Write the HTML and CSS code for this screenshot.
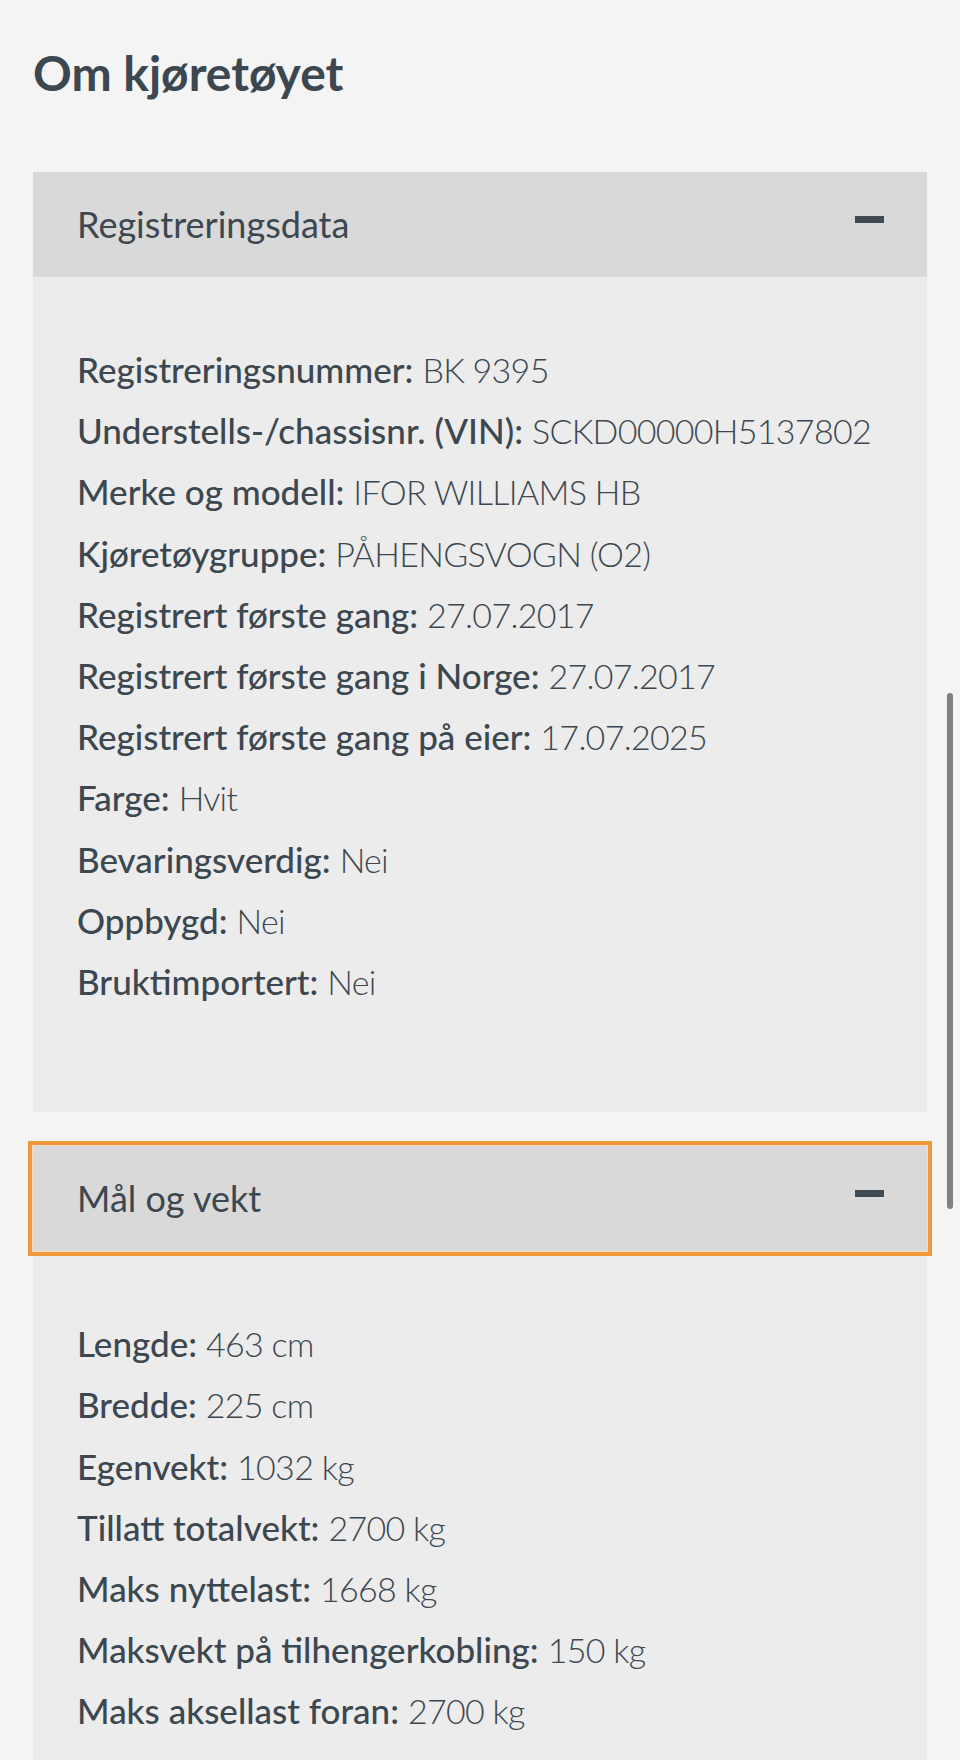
FILE: index.html
```html
<!DOCTYPE html>
<html lang="no">
<head>
<meta charset="utf-8">
<title>Om kjøretøyet</title>
<link rel="stylesheet" href="styles.css">
</head>
<body>
<main class="page">
  <h1 class="title">Om kjøretøyet</h1>

  <section class="panel">
    <div class="panel-head">
      <span class="panel-title">Registreringsdata</span>
      <span class="minus"></span>
    </div>
    <div class="panel-body">
      <p class="row"><span class="label">Registreringsnummer:</span> <span class="value">BK 9395</span></p>
      <p class="row"><span class="label">Understells-/chassisnr. (VIN):</span> <span class="value">SCKD00000H5137802</span></p>
      <p class="row"><span class="label">Merke og modell:</span> <span class="value">IFOR WILLIAMS HB</span></p>
      <p class="row"><span class="label">Kjøretøygruppe:</span> <span class="value">PÅHENGSVOGN (O2)</span></p>
      <p class="row"><span class="label">Registrert første gang:</span> <span class="value">27.07.2017</span></p>
      <p class="row"><span class="label">Registrert første gang i Norge:</span> <span class="value">27.07.2017</span></p>
      <p class="row"><span class="label">Registrert første gang på eier:</span> <span class="value">17.07.2025</span></p>
      <p class="row"><span class="label">Farge:</span> <span class="value">Hvit</span></p>
      <p class="row"><span class="label">Bevaringsverdig:</span> <span class="value">Nei</span></p>
      <p class="row"><span class="label">Oppbygd:</span> <span class="value">Nei</span></p>
      <p class="row"><span class="label">Bruktimportert:</span> <span class="value">Nei</span></p>
    </div>
  </section>

  <section class="panel">
    <div class="panel-head focused">
      <span class="panel-title">Mål og vekt</span>
      <span class="minus"></span>
    </div>
    <div class="panel-body">
      <p class="row"><span class="label">Lengde:</span> <span class="value">463 cm</span></p>
      <p class="row"><span class="label">Bredde:</span> <span class="value">225 cm</span></p>
      <p class="row"><span class="label">Egenvekt:</span> <span class="value">1032 kg</span></p>
      <p class="row"><span class="label">Tillatt totalvekt:</span> <span class="value">2700 kg</span></p>
      <p class="row"><span class="label">Maks nyttelast:</span> <span class="value">1668 kg</span></p>
      <p class="row"><span class="label">Maksvekt på tilhengerkobling:</span> <span class="value">150 kg</span></p>
      <p class="row"><span class="label">Maks aksellast foran:</span> <span class="value">2700 kg</span></p>
    </div>
  </section>
</main>
<div class="scrollbar"></div>
</body>
</html>
```
FILE: styles.css
```css
html, body {
  margin: 0;
  padding: 0;
  background: #f4f4f4;
}
body {
  font-family: Lato, "Open Sans", "Liberation Sans", sans-serif;
  color: #3c4750;
  height: 1760px;
  overflow: hidden;
}
.page {
  padding: 0 33px;
}
.title {
  margin: 0;
  padding-top: 43px;
  padding-bottom: 69px;
  font-size: 48px;
  line-height: 60px;
  font-weight: 700;
  color: #3c4750;
}
.panel {
  margin-bottom: 34px;
}
.panel-head {
  height: 105px;
  background: #d9d9d9;
  display: flex;
  align-items: center;
  justify-content: space-between;
  padding: 0 43px 0 44px;
}
.panel-head.focused {
  position: relative;
  z-index: 1;
  box-shadow: 0 0 0 1px #f6dcc0, 0 0 0 5px #f0993a;
}
.panel-title {
  font-size: 36px;
  font-weight: 400;
  margin-top: -1px;
}
.minus {
  width: 29px;
  height: 7px;
  background: #3f4a52;
  margin-top: -10px;
}
.panel-body {
  background: #ececec;
  padding: 62px 44px 100px;
}
.row {
  margin: 0;
  font-size: 35px;
  line-height: 61.2px;
  white-space: nowrap;
}
.label {
  font-weight: 500;
}
.value {
  font-weight: 300;
  font-size: 34px;
  letter-spacing: -0.7px;
}
.scrollbar {
  position: fixed;
  left: 947px;
  top: 693px;
  width: 6px;
  height: 516px;
  border-radius: 3px;
  background: #808080;
}
```
